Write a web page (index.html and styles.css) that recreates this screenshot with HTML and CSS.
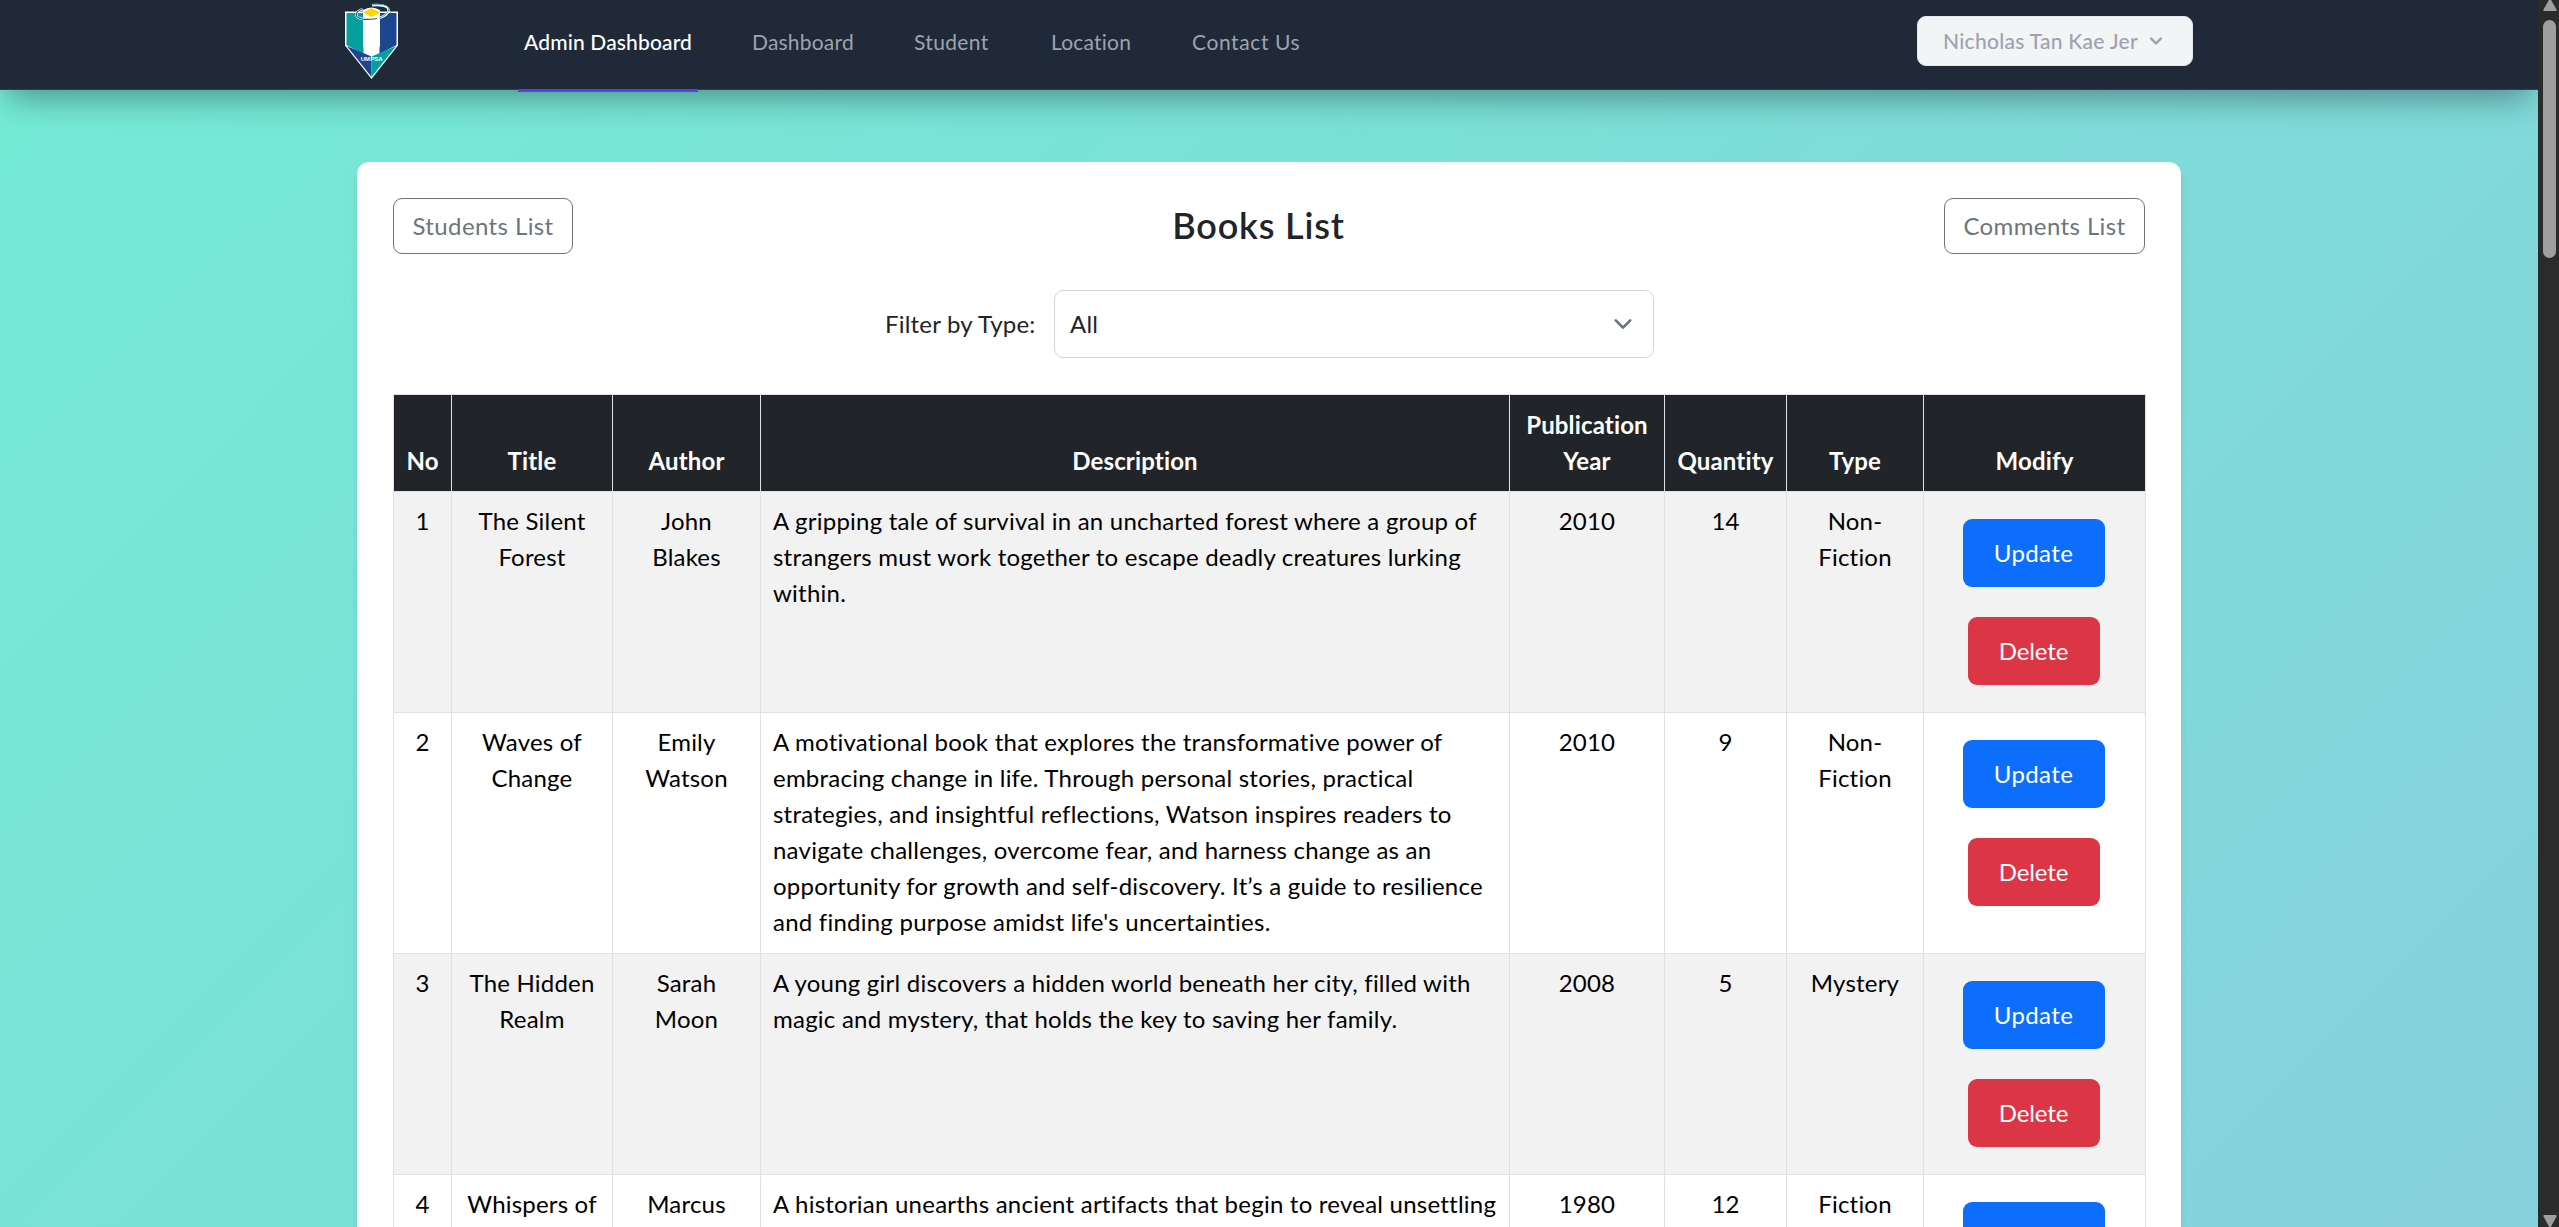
FILE: index.html
```html
<!DOCTYPE html>
<html lang="en">
<head>
<meta charset="utf-8">
<title>Books List</title>
<link rel="stylesheet" href="styles.css">
</head>
<body>
<div class="page">
  <header class="navbar">
    <div class="navbar-inner">
      <svg class="logo" viewBox="0 0 54 76" width="54" height="76">
        <path d="M0 7.500H53V41.500L26.500 75L0 41.500Z" fill="#fff"/>
        <path d="M1.500 9H18.500V50L1.500 41Z" fill="#05a09e"/>
        <path d="M34.500 9H51.500V41L34.500 50Z" fill="#1c478f"/>
        <path d="M1.800 42L26.500 52.500V73Z" fill="#1c478f"/>
        <path d="M51.200 42L26.500 52.500V73Z" fill="#05a09e"/>
        <path d="M18 6Q26.500 1 35 6V42L26.500 53L18 42Z" fill="#fff"/>
        <path d="M18 5C11 7 10 11.500 13 13.500C17 16 25 15.700 32 14.500C39 13 44 9.500 43.500 5.500C43 1.500 34 0.500 27 1.200" fill="none" stroke="#fff" stroke-width="2.400"/>
        <path d="M27 1C34 -0.500 43 0.500 43.700 4.500C44.200 8.500 39 12.500 34 14" fill="none" stroke="#3aa9a8" stroke-width="1"/>
        <path d="M18 4.500C11 7 10 11.500 13 13.500C17 16 25 15.700 32 14.500" fill="none" stroke="#23559a" stroke-width="1.200"/>
        <path d="M26.500 4L35 8.500L26.500 13L18 8.500Z" fill="#ffd500"/>
        <text x="26.700" y="57" text-anchor="middle" textLength="22" lengthAdjust="spacingAndGlyphs" class="logo-text">UMPSA</text>
      </svg>
      <nav class="links">
        <a class="link active">Admin Dashboard</a>
        <a class="link l2">Dashboard</a>
        <a class="link l3">Student</a>
        <a class="link l4">Location</a>
        <a class="link l5">Contact Us</a>
      </nav>
      <button class="user">
        <span>Nicholas Tan Kae Jer</span>
        <svg width="24" height="24" viewBox="0 0 20 20"><path fill="currentColor" fill-rule="evenodd" clip-rule="evenodd" d="M5.293 7.293a1 1 0 011.414 0L10 10.586l3.293-3.293a1 1 0 111.414 1.414l-4 4a1 1 0 01-1.414 0l-4-4a1 1 0 010-1.414z"/></svg>
      </button>
    </div>
  </header>
  <main class="card">
    <div class="card-head">
      <a class="btn-outline students">Students List</a>
      <h2 class="title">Books List</h2>
      <a class="btn-outline comments">Comments List</a>
    </div>
    <div class="filter">
      <label class="filter-label">Filter by Type:</label>
      <div class="select">
        <span>All</span>
        <svg width="36" height="36" viewBox="0 0 20 20"><path d="M6 8l4 4 4-4" fill="none" stroke="#6b7280" stroke-width="1.500" stroke-linecap="round" stroke-linejoin="round"/></svg>
      </div>
    </div>
    <table class="books">
      <colgroup><col class="c1"><col class="c2"><col class="c3"><col class="c4"><col class="c5"><col class="c6"><col class="c7"><col class="c8"></colgroup>
      <thead>
        <tr><th>No</th><th>Title</th><th>Author</th><th>Description</th><th>Publication Year</th><th>Quantity</th><th>Type</th><th>Modify</th></tr>
      </thead>
      <tbody>
        <tr>
          <td>1</td><td>The Silent<br>Forest</td><td>John<br>Blakes</td>
          <td class="desc">A gripping tale of survival in an uncharted forest where a group of<br>strangers must work together to escape deadly creatures lurking<br>within.</td>
          <td>2010</td><td>14</td><td>Non-<br>Fiction</td>
          <td class="modify"><div class="actions"><a class="btn update">Update</a><a class="btn delete">Delete</a></div></td>
        </tr>
        <tr>
          <td>2</td><td>Waves of<br>Change</td><td>Emily<br>Watson</td>
          <td class="desc">A motivational book that explores the transformative power of<br>embracing change in life. Through personal stories, practical<br>strategies, and insightful reflections, Watson inspires readers to<br>navigate challenges, overcome fear, and harness change as an<br>opportunity for growth and self-discovery. It’s a guide to resilience<br>and finding purpose amidst life's uncertainties.</td>
          <td>2010</td><td>9</td><td>Non-<br>Fiction</td>
          <td class="modify"><div class="actions"><a class="btn update">Update</a><a class="btn delete">Delete</a></div></td>
        </tr>
        <tr>
          <td>3</td><td>The Hidden<br>Realm</td><td>Sarah<br>Moon</td>
          <td class="desc">A young girl discovers a hidden world beneath her city, filled with<br>magic and mystery, that holds the key to saving her family.</td>
          <td>2008</td><td>5</td><td>Mystery</td>
          <td class="modify"><div class="actions"><a class="btn update">Update</a><a class="btn delete">Delete</a></div></td>
        </tr>
        <tr>
          <td>4</td><td>Whispers of</td><td>Marcus</td>
          <td class="desc">A historian unearths ancient artifacts that begin to reveal unsettling</td>
          <td>1980</td><td>12</td><td>Fiction</td>
          <td class="modify"><div class="actions"><a class="btn update"></a></div></td>
        </tr>
      </tbody>
    </table>
  </main>
</div>
<aside class="scrollbar">
  <svg width="21" height="12" viewBox="0 0 21 12"><path d="M12 -2L18.500 9.500Q19 11 17.500 11H6.500Q5 11 5.500 9.500Z" fill="#9f9f9f"/></svg>
  <div class="thumb"></div>
  <svg class="down" width="21" height="13" viewBox="0 0 21 13"><path d="M12 14.500L5.500 2.500Q5 1 6.500 1H17.500Q19 1 18.500 2.500Z" fill="#9f9f9f"/></svg>
</aside>
</body>
</html>
```
FILE: styles.css
```css
* { box-sizing: border-box; }

html, body { margin: 0; height: 1227px; overflow: hidden; }

body {
  display: flex;
  font: 400 24px/36px Lato, "Open Sans", sans-serif;
  letter-spacing: 0.2px;
  color: #212529;
}

.page {
  width: 2538px;
  height: 1227px;
  overflow: hidden;
  background: linear-gradient(135deg, #74ebd5, #9face6) 0 0 / 2538px 6640px no-repeat;
}

/* Navigation */
.navbar {
  position: relative;
  height: 90px;
  background: #1f2937;
  border-bottom: 1px solid #3d3a50;
  box-shadow: 0 14px 34px -8px rgba(0, 0, 0, 0.4);
}
.navbar-inner {
  display: flex;
  align-items: flex-start;
  width: 1848px;
  margin-left: 345px;
}
.logo { margin-top: 4px; overflow: visible; }
.logo-text { font: 700 6px "Liberation Sans", Arial, sans-serif; letter-spacing: 0; fill: #fff; }
.links { display: flex; margin-left: 119px; }
.link {
  height: 92px;
  padding-top: 24px;
  font-size: 21px;
  color: #9ca3af;
  white-space: nowrap;
  letter-spacing: 0.2px;
}
.link.active {
  width: 180px;
  padding-left: 6px;
  font-weight: 500;
  color: #fff;
  letter-spacing: 0.15px;
  border-bottom: 3px solid #4f46e5;
}
.l2 { width: 162px; margin-left: 54px; }
.l3 { width: 137px; }
.l4 { width: 141px; }
.link.l3 { letter-spacing: 0.35px; }
.link.l5 { letter-spacing: 0.6px; }
.user {
  display: flex;
  align-items: center;
  gap: 6px;
  width: 276px;
  height: 50px;
  margin: 16px 0 0 auto;
  padding: 0 0 0 25px;
  border: 1px solid #e5e7eb;
  border-radius: 9px;
  background: #f3f4f6;
  color: #9ca3af;
  font: 500 21px/30px Lato, sans-serif;
  letter-spacing: 0.28px;
  white-space: nowrap;
}

/* Card */
.card {
  width: 1824px;
  height: 1400px;
  margin: 72px 0 0 357px;
  padding: 36px;
  background: #fff;
  border-radius: 12px;
  box-shadow: 0 6px 9px rgba(0, 0, 0, 0.08);
}
.card-head { display: flex; justify-content: space-between; align-items: center; height: 56px; }
.btn-outline {
  height: 56px;
  line-height: 53px;
  border: 1px solid #6c757d;
  border-radius: 9px;
  color: #6c757d;
  text-align: center;
  letter-spacing: 0.4px;
}
.students { width: 180px; }
.comments { width: 201px; }
.title { margin: 0 0 2px; font-size: 36px; line-height: 44px; font-weight: 600; letter-spacing: 0.85px; }

.filter { display: flex; align-items: center; margin: 36px 0 36px 492px; }
.filter-label { width: 169px; }
.select {
  display: flex;
  align-items: center;
  justify-content: space-between;
  width: 600px;
  height: 68px;
  padding: 0 12px 0 15px;
  border: 1px solid #d1d5db;
  border-radius: 9px;
}

/* Table */
.books {
  width: 1752px;
  table-layout: fixed;
  border-collapse: collapse;
  text-align: center;
  color: #000;
}
.c1 { width: 58px; }
.c2 { width: 161px; }
.c3 { width: 148px; }
.c4 { width: 749px; }
.c5 { width: 155px; }
.c6 { width: 122px; }
.c7 { width: 137px; }
.c8 { width: 222px; }
.books th, .books td {
  padding: 11px 0 13px;
  border: 1px solid #dee2e6;
  vertical-align: top;
  white-space: nowrap;
}
.books th {
  padding: 12px 10px;
  vertical-align: bottom;
  white-space: normal;
  font-weight: 700;
  letter-spacing: 0.15px;
  color: #fff;
  background: #212529;
}
.books tbody tr:nth-child(odd) td { background: #f2f2f2; }
.books .desc { padding-left: 12px; text-align: left; letter-spacing: 0.23px; }
.books .modify { padding: 27px 2px 27px 0; }
.actions { display: flex; flex-direction: column; align-items: center; gap: 30px; }
.btn { height: 68px; line-height: 67px; border-radius: 9px; color: #fff; }
.update { width: 142px; background: #0d6efd; letter-spacing: 0.4px; }
.delete { width: 132px; background: #dc3545; letter-spacing: -0.1px; }

/* Scrollbar */
.scrollbar { display: flex; flex-direction: column; width: 21px; height: 1227px; background: #2b2b2b; }
.thumb { width: 13px; height: 238px; margin: 8px 0 0 5px; border-radius: 7px; background: #9f9f9f; }
.down { margin-top: auto; }
```
